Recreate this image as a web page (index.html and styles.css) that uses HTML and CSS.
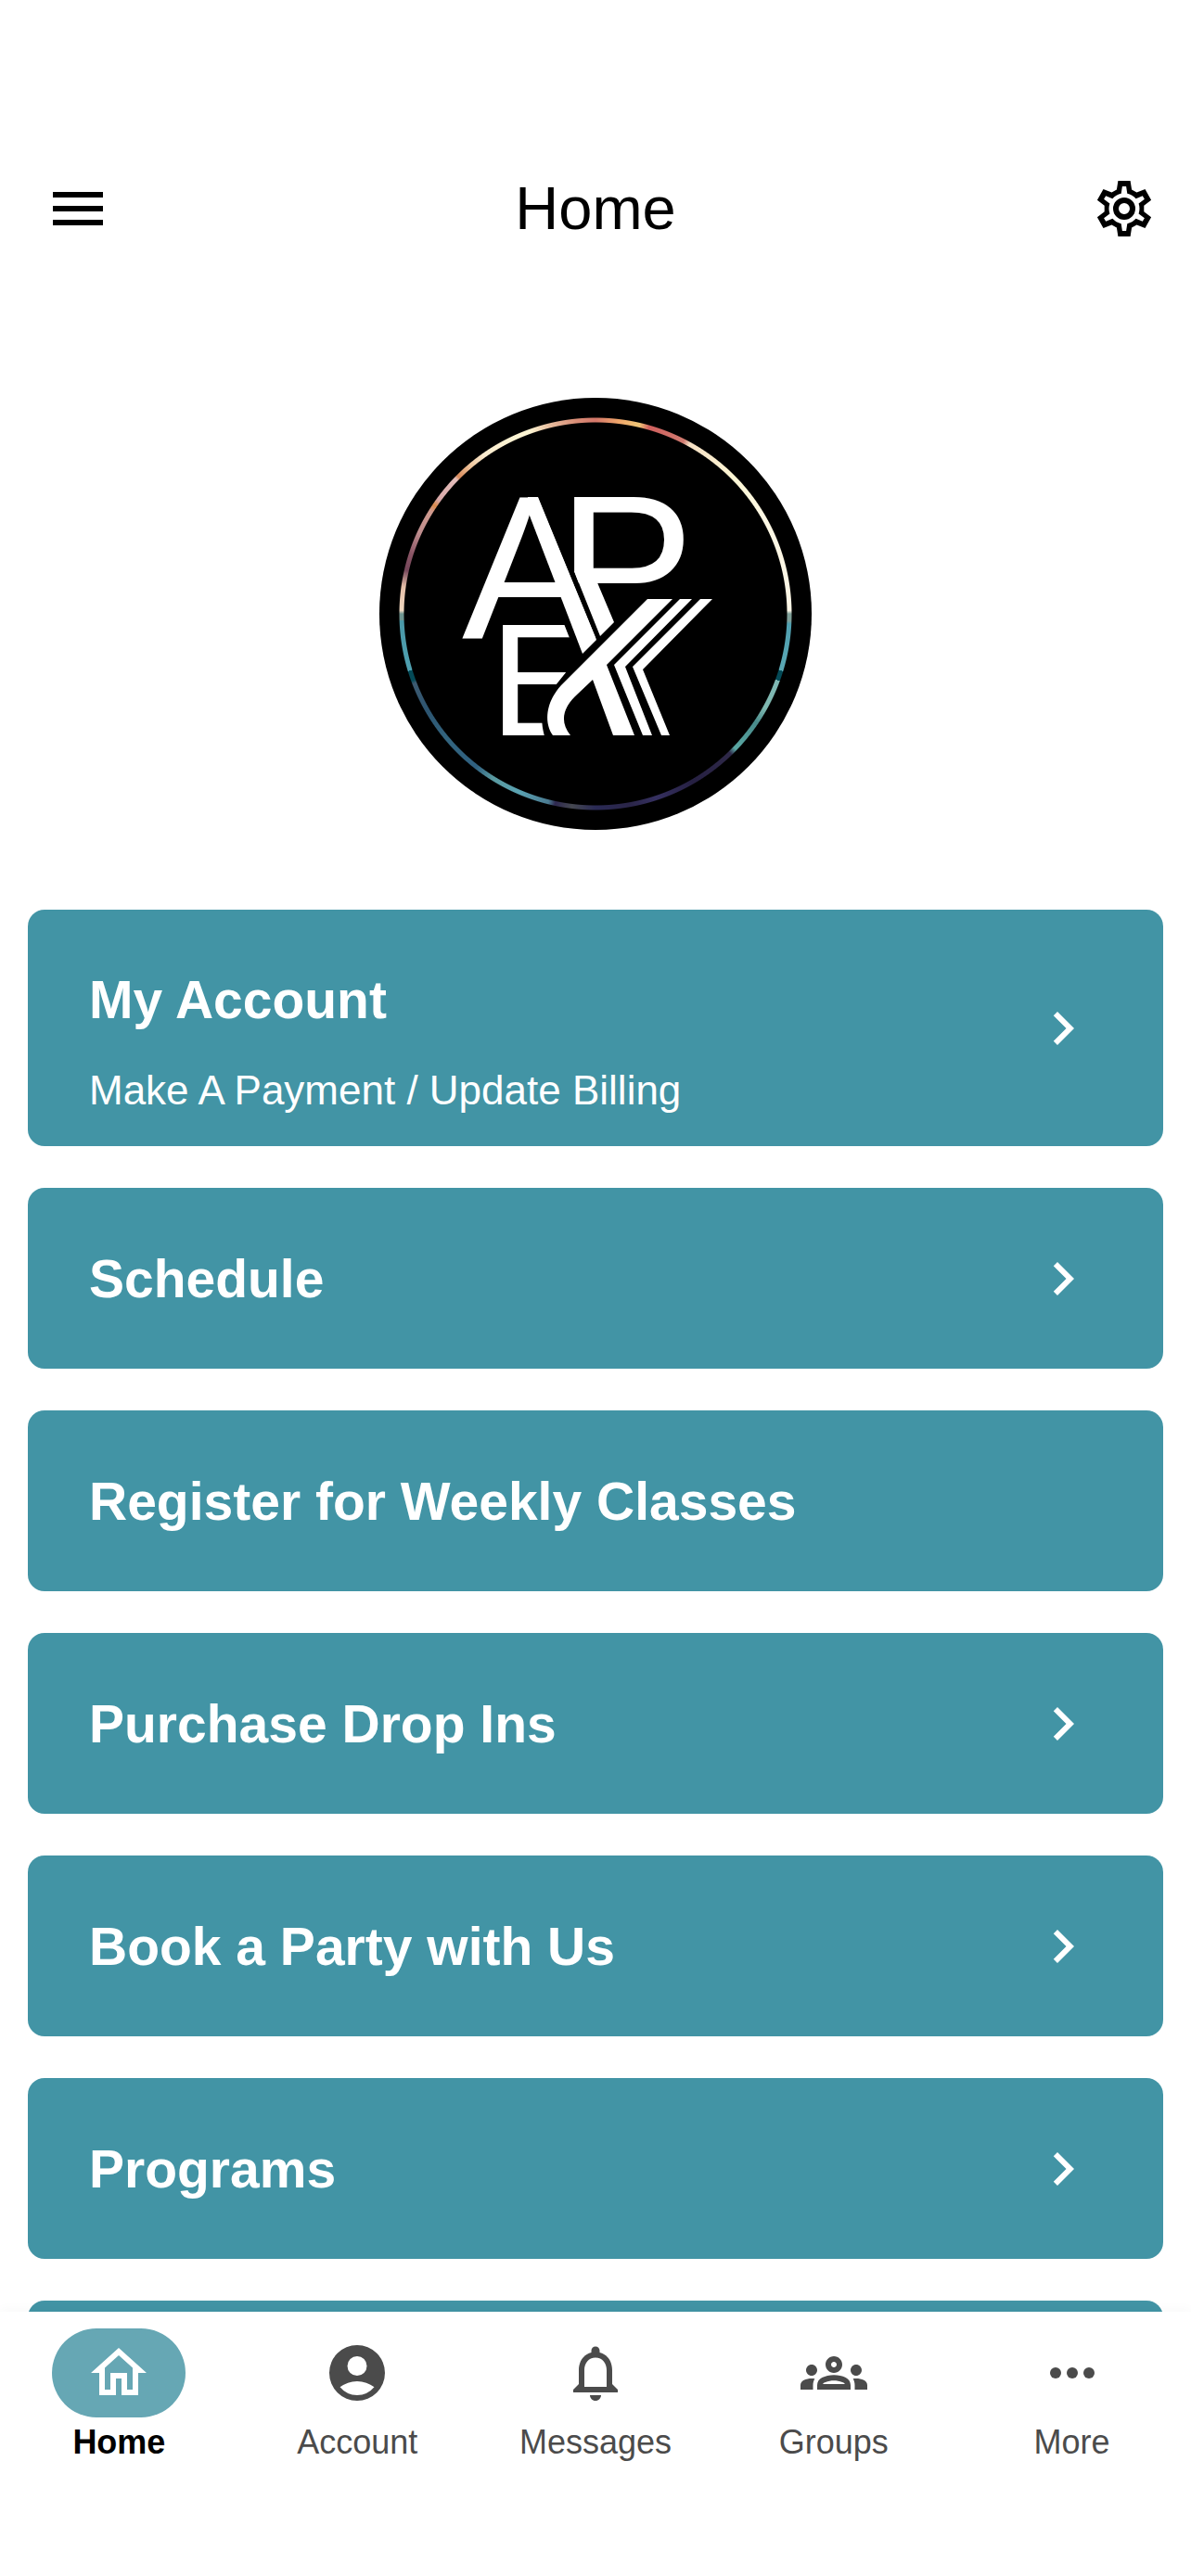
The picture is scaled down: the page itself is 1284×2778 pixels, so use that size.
FILE: index.html
```html
<!DOCTYPE html>
<html lang="en">
  <head>
    <meta charset="UTF-8">
    <meta name="viewport" content="width=device-width">
    <title>Home</title>
    <link rel="stylesheet" href="styles.css">
  </head>
  <body>

    <header>
      <button type="button" class="icon-button menu" aria-label="Menu">
        <svg class="icon" viewBox="0 0 24 24"><path d="M3 6h18v2H3zM3 11h18v2H3zM3 16h18v2H3z"/></svg>
      </button>
      <h1>Home</h1>
      <button type="button" class="icon-button settings" aria-label="Settings">
        <svg class="icon" viewBox="0 0 24 24"><path d="M12,8A4,4 0 0,1 16,12A4,4 0 0,1 12,16A4,4 0 0,1 8,12A4,4 0 0,1 12,8M12,10A2,2 0 0,0 10,12A2,2 0 0,0 12,14A2,2 0 0,0 14,12A2,2 0 0,0 12,10M9.8,22L9.3,18.8L7.5,17.8L4.5,19L2.3,15.1L4.9,13.1V10.9L2.3,8.9L4.5,5L7.5,6.2L9.3,5.2L9.8,2H14.2L14.7,5.2L16.5,6.2L19.5,5L21.7,8.9L19.1,10.9V13.1L21.7,15.1L19.5,19L16.5,17.8L14.7,18.8L14.2,22H9.8M11.3,4L10.9,6.6C9.7,6.9 8.6,7.5 7.8,8.4L5.4,7.4L4.7,8.6L6.8,10.2C6.4,11.4 6.4,12.6 6.8,13.8L4.7,15.4L5.4,16.6L7.8,15.6C8.6,16.5 9.7,17.1 10.9,17.4L11.3,20H12.7L13.1,17.4C14.3,17.1 15.4,16.5 16.2,15.6L18.6,16.6L19.3,15.4L17.2,13.8C17.6,12.6 17.6,11.4 17.2,10.2L19.3,8.6L18.6,7.4L16.2,8.4C15.4,7.5 14.3,6.9 13.1,6.6L12.7,4H11.3Z"/></svg>
      </button>
    </header>

    <main>
      <div class="logo">
        <svg viewBox="9 9 466 466" role="img" aria-label="Apex">
          <clipPath id="clip-a"><path d="M80 100H173L243 270V280H80z"/></clipPath>
          <clipPath id="clip-p"><path d="M215 100H350V209H224L219 196z"/></clipPath>
          <clipPath id="clip-e"><path d="M130 240H203L214 268L211 304L199 319C187 332 180 348 187 374H130z"/></clipPath>
          <g class="letters">
            <text class="large" x="98" y="268" clip-path="url(#clip-a)">A</text>
            <text class="large" x="201" y="268" clip-path="url(#clip-p)">P</text>
            <text class="small" x="128" y="373" clip-path="url(#clip-e)">E</text>
          </g>
          <!-- ribbons running out of the A and the P -->
          <path d="M180 116L243 270L228 285L169 131V116z"/>
          <path d="M219 196L247 266L262 251L243 206V196z"/>
          <!-- crossing ribbon and its two stripes -->
          <path d="M298 226H325L254 297L284 373H261L239 313L220 331C206 345 204 359 215 373H196C187 361 187 339 205 319z"/>
          <path d="M333 226H346L274 299L303 373H293L262 297z"/>
          <path d="M355 226H368L293 302L322 373H313L282 299z"/>
        </svg>
      </div>

      <nav class="cards" aria-label="Shortcuts">
        <a href="#account" class="card">
          <span class="text">
            <span class="title">My Account</span>
            <span class="subtitle">Make A Payment / Update Billing</span>
          </span>
          <svg class="icon" viewBox="0 0 24 24"><path d="M8.59 16.58L13.17 12L8.59 7.41L10 6l6 6l-6 6z"/></svg>
        </a>
        <a href="#schedule" class="card">
          <span class="text"><span class="title">Schedule</span></span>
          <svg class="icon" viewBox="0 0 24 24"><path d="M8.59 16.58L13.17 12L8.59 7.41L10 6l6 6l-6 6z"/></svg>
        </a>
        <a href="#register" class="card">
          <span class="text"><span class="title">Register for Weekly Classes</span></span>
        </a>
        <a href="#drop-ins" class="card">
          <span class="text"><span class="title">Purchase Drop Ins</span></span>
          <svg class="icon" viewBox="0 0 24 24"><path d="M8.59 16.58L13.17 12L8.59 7.41L10 6l6 6l-6 6z"/></svg>
        </a>
        <a href="#party" class="card">
          <span class="text"><span class="title">Book a Party with Us</span></span>
          <svg class="icon" viewBox="0 0 24 24"><path d="M8.59 16.58L13.17 12L8.59 7.41L10 6l6 6l-6 6z"/></svg>
        </a>
        <a href="#programs" class="card">
          <span class="text"><span class="title">Programs</span></span>
          <svg class="icon" viewBox="0 0 24 24"><path d="M8.59 16.58L13.17 12L8.59 7.41L10 6l6 6l-6 6z"/></svg>
        </a>
        <div class="card"></div>
      </nav>
    </main>

    <nav class="tabs" aria-label="Main">
      <a href="#home" class="tab active" aria-current="page">
        <span class="pill">
          <svg class="icon" viewBox="0 0 24 24"><path d="M12 5.69l5 4.5V18h-2v-6H9v6H7v-7.81l5-4.5M12 3L2 12h3v8h6v-6h2v6h6v-8h3L12 3z"/></svg>
        </span>
        Home
      </a>
      <a href="#account" class="tab">
        <span class="pill">
          <svg class="icon" viewBox="0 0 24 24"><path fill-rule="evenodd" d="M12 2a10 10 0 0 0 0 20a10 10 0 0 0 0-20zM12 6a3.5 3.5 0 0 1 0 7a3.5 3.5 0 0 1 0-7zM5.85 17.1q1.275-.975 2.85-1.54T12 15t3.3.56 2.85 1.54A8 8 0 0 1 12 20a8 8 0 0 1-6.15-2.9z"/></svg>
        </span>
        Account
      </a>
      <a href="#messages" class="tab">
        <span class="pill">
          <svg class="icon" viewBox="0 0 24 24"><path d="M12 22c1.1 0 2-.9 2-2h-4c0 1.1.9 2 2 2zm6-6v-5c0-3.07-1.63-5.64-4.5-6.32V4c0-.83-.67-1.5-1.5-1.5s-1.5.67-1.5 1.5v.68C7.64 5.36 6 7.92 6 11v5l-2 2v1h16v-1l-2-2zm-2 1H8v-6c0-2.48 1.51-4.5 4-4.5s4 2.02 4 4.5v6z"/></svg>
        </span>
        Messages
      </a>
      <a href="#groups" class="tab">
        <span class="pill">
          <svg class="icon" viewBox="0 0 24 24"><path d="M4 13c1.1 0 2-.9 2-2s-.9-2-2-2-2 .9-2 2 .9 2 2 2zm1.13 1.1c-.37-.06-.74-.1-1.13-.1-.99 0-1.93.21-2.78.58C.48 14.9 0 15.62 0 16.43V18h4.5v-1.61c0-.83.23-1.61.63-2.29zM20 13c1.1 0 2-.9 2-2s-.9-2-2-2-2 .9-2 2 .9 2 2 2zm4 3.43c0-.81-.48-1.53-1.22-1.85-.85-.37-1.79-.58-2.78-.58-.39 0-.76.04-1.13.1.4.68.63 1.46.63 2.29V18H24v-1.57zm-7.76-2.78c-1.17-.52-2.61-.9-4.24-.9s-3.07.39-4.24.9C6.68 14.13 6 15.21 6 16.39V18h12v-1.61c0-1.18-.68-2.26-1.76-2.74zM8.07 16c.09-.23.13-.39.91-.69.97-.38 1.99-.56 3.02-.56s2.05.18 3.02.56c.77.3.81.46.91.69H8.07zM12 8c.55 0 1 .45 1 1s-.45 1-1 1-1-.45-1-1 .45-1 1-1m0-2c-1.66 0-3 1.34-3 3s1.34 3 3 3 3-1.34 3-3-1.34-3-3-3z"/></svg>
        </span>
        Groups
      </a>
      <a href="#more" class="tab">
        <span class="pill">
          <svg class="icon" viewBox="0 0 24 24"><circle cx="6" cy="12" r="2"/><circle cx="12" cy="12" r="2"/><circle cx="18" cy="12" r="2"/></svg>
        </span>
        More
      </a>
    </nav>

  </body>
</html>
```

FILE: styles.css
```css
html, body {
  height: 100%;
}

body {
  background: white;
  color: black;
  display: flex;
  flex-direction: column;
  font-family: "Liberation Sans", Arial, Helvetica, sans-serif;
  margin: 0;
}

a {
  text-decoration: none;
}

.icon {
  display: block;
  fill: currentColor;
  flex: none;
  height: 72px;
  width: 72px;
}

.icon-button {
  background: none;
  border: none;
  color: inherit;
  padding: 0;
}

header {
  align-items: center;
  display: grid;
  grid-template-columns: 1fr auto 1fr;
  padding: 189px 36px 0;
}

.menu {
  justify-self: start;
  padding-left: 12px;
}

.settings {
  justify-self: end;
}

h1 {
  font-size: 65px;
  font-weight: 400;
  line-height: 72px;
  margin: 0;
}

main {
  flex: 1;
  min-height: 0;
  overflow-y: auto;
  padding: 168px 30px 0;
  scrollbar-width: none;
}

/* the conic gradient only shows through the thin ring */
.logo {
  background:
    radial-gradient(circle closest-side, #000 206px, transparent 207px, transparent 211px, #000 212px),
    conic-gradient(
      #d4776a 0deg, #efa66a 7deg, #f0c878 13deg, #d0605e 16deg, #d07a70 27deg,
      #f5e0c4 29deg, #fdf6d4 45deg, #fdf8e4 60deg, #fdf6e6 89deg,
      #7f9f98 90deg, #7f9f98 92deg, #4f9fb0 93deg, #5ba8b4 107deg,
      #044a57 107deg, #044a57 110deg, #7fb8b4 110deg, #7fb8b0 119deg,
      #488a8a 124deg, #5aa8a4 134deg, #2e2848 136deg, #262042 150deg,
      #353060 162deg, #2a2548 170deg, #2a2a55 180deg, #454850 187deg,
      #2e2850 192deg, #4a7a90 194deg, #5aa2b2 203deg, #5a9aa0 212deg,
      #2f6080 218deg, #33657f 230deg, #2c5470 240deg, #3d5a70 249deg,
      #044a57 250deg, #044a57 253deg, #4fa0b0 253deg, #4a98a8 268deg,
      #6f9590 268deg, #6f9590 270deg, #f0d8c0 271deg, #e5bfa8 278deg,
      #75465a 283deg, #8a5565 288deg, #c08f8f 295deg, #d09a8e 302deg,
      #d98a4a 304deg, #d8a8a8 306deg, #e5bfbc 314deg, #d98a5a 315deg,
      #f0c8a0 320deg, #fbecd0 325deg, #fdf6d4 340deg, #e8bfa0 346deg,
      #d98f78 354deg, #d4776a 360deg
    );
  border-radius: 50%;
  height: 466px;
  margin: 0 auto 86px;
  width: 466px;
}

.logo svg {
  display: block;
  fill: white;
}

.letters .large {
  font-size: 221px;
}

.letters .small {
  font-size: 172px;
}

.cards {
  display: flex;
  flex-direction: column;
  gap: 45px;
}

.card {
  align-items: center;
  background: #4294a5;
  border-radius: 18px;
  box-sizing: border-box;
  color: white;
  display: flex;
  justify-content: space-between;
  min-height: 195px;
  padding: 0 72px 0 66px;
}

.text {
  display: flex;
  flex-direction: column;
}

.title {
  font-size: 57px;
  font-weight: 700;
  line-height: 66px;
}

.subtitle {
  font-size: 44px;
  line-height: 48px;
  margin-top: 41px;
}

.text:has(.subtitle) {
  padding: 64px 0 36px;
}

.tabs {
  background: white;
  box-shadow: 0 -2px 12px rgba(0, 0, 0, 0.03);
  display: grid;
  grid-template-columns: repeat(5, 1fr);
  padding: 18px 0 123px;
  position: relative;
}

.tab {
  align-items: center;
  color: #4b4b4b;
  display: flex;
  flex-direction: column;
  font-size: 36px;
  gap: 6px;
  line-height: 42px;
}

.pill {
  border-radius: 48px;
  padding: 12px 36px;
}

.active {
  color: black;
  font-weight: 700;
}

.active .pill {
  background: #66a7b4;
  color: white;
}
```
